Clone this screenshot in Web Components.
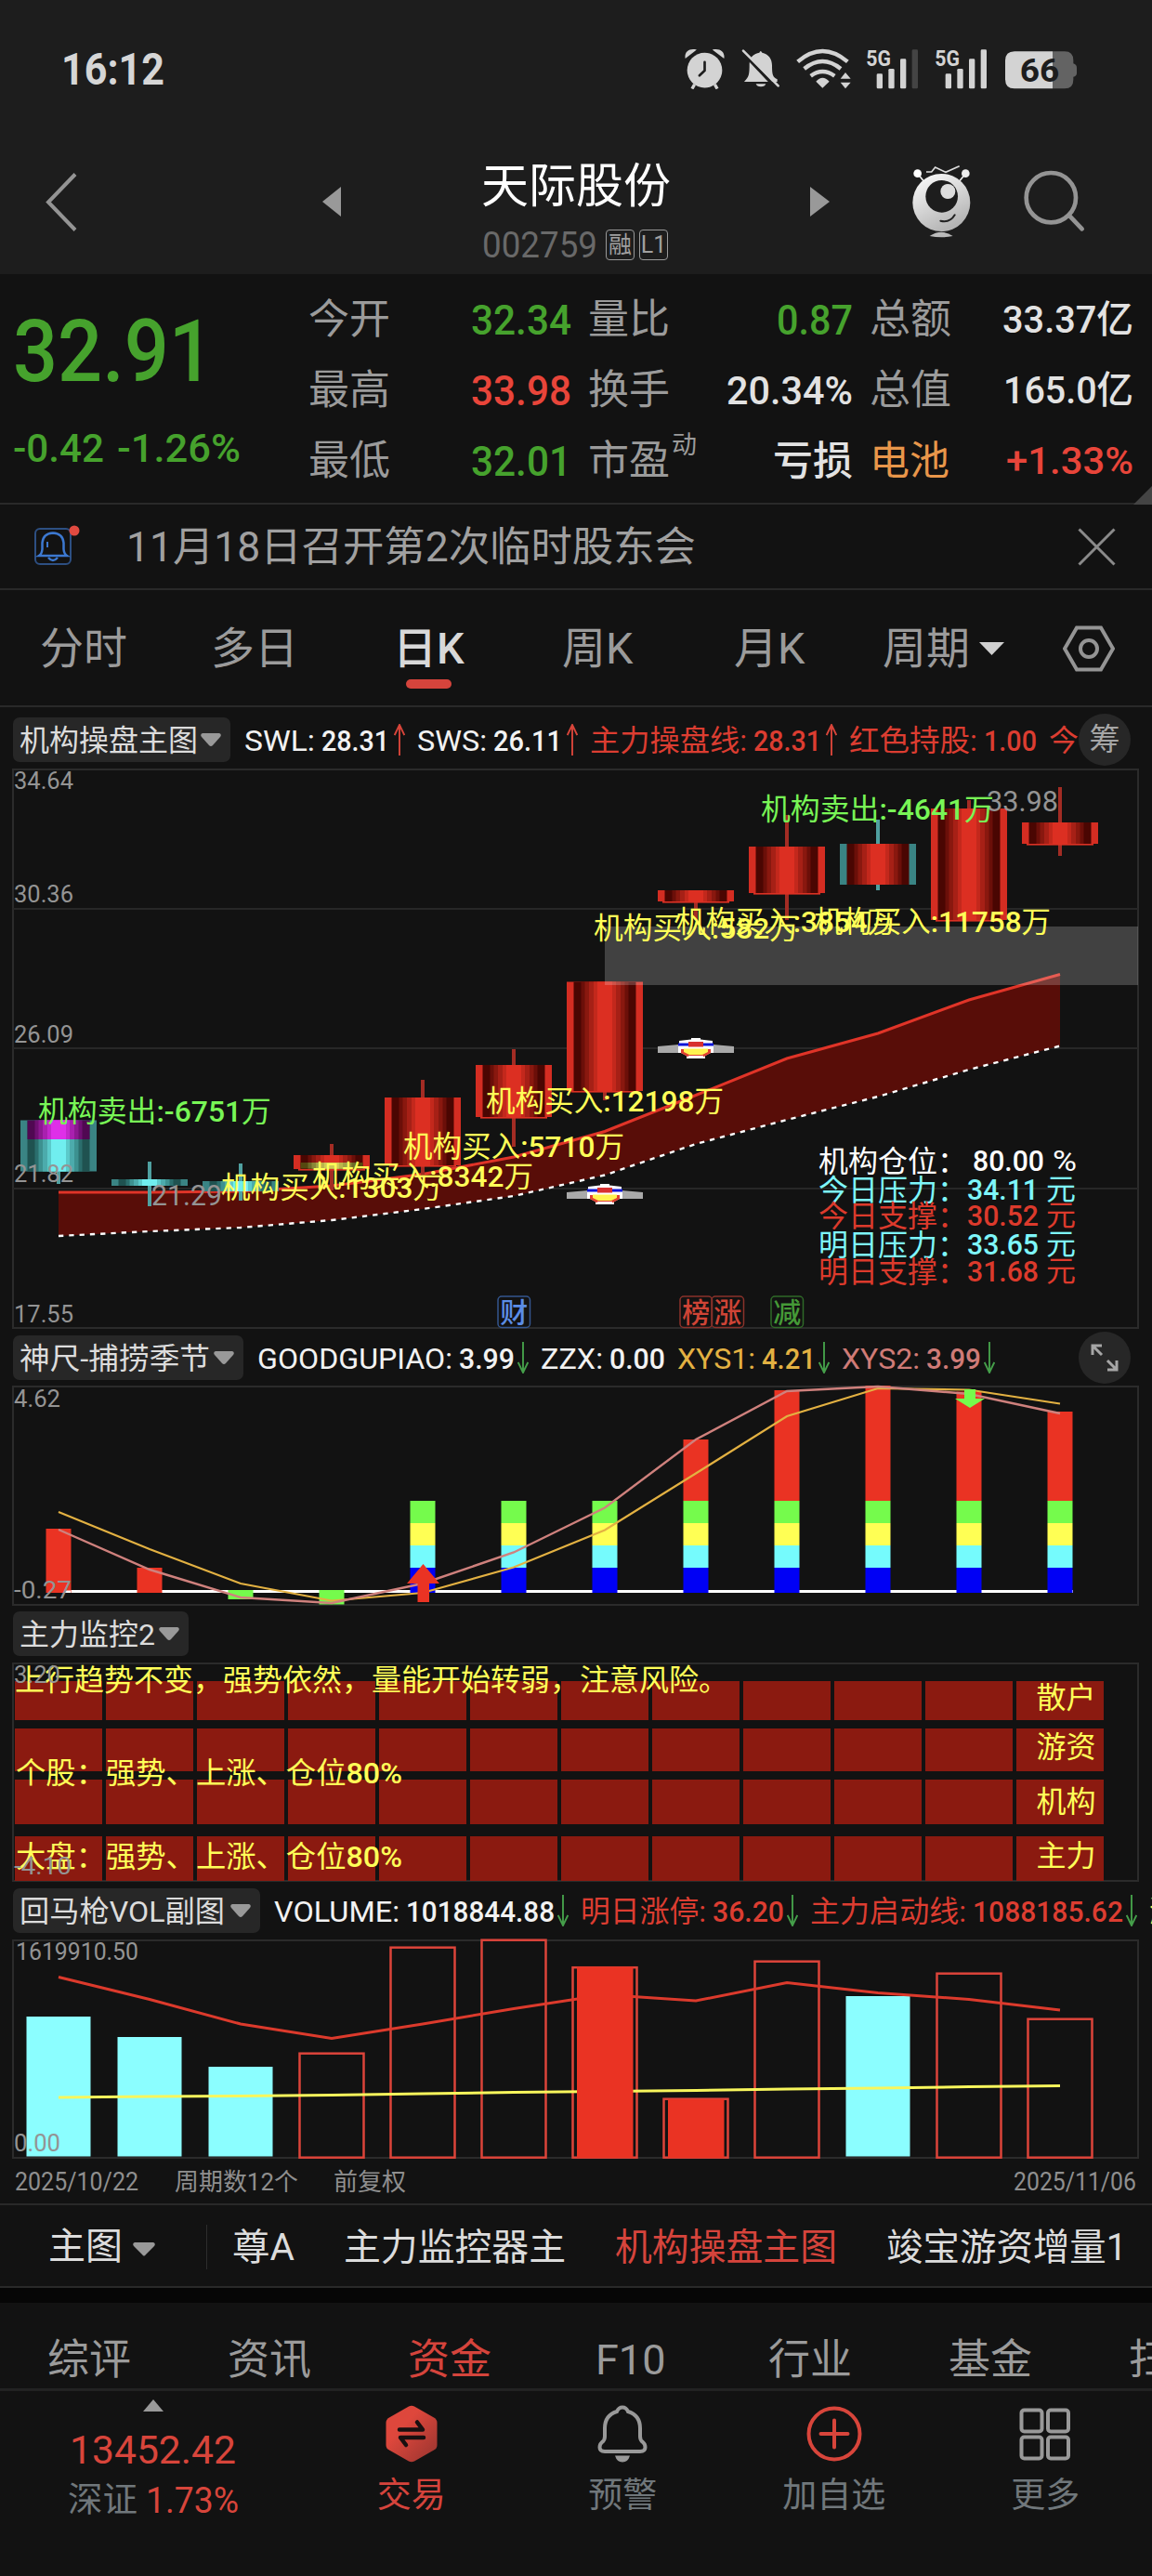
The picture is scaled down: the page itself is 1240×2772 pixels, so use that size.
<!DOCTYPE html>
<html lang="zh-CN">
<head>
<meta charset="utf-8">
<title>天际股份 002759</title>
<style>
    html, body { margin: 0; background: #121212; }
    body { width: 1240px; height: 2772px; overflow: hidden; color: #dcdcdc; font-family: Roboto, "Noto Sans CJK SC", sans-serif; }
</style>
</head>
<body>
<stock-page></stock-page>

<script>
const RED = '#dc3d31';
const GREEN = '#46a22d';
const GREY = '#949494';
const COLUMNS = 12;
const columnX = (i) => 63 + 98 * i;

function define(name, html, setup) {
    window.customElements.define(name, class extends HTMLElement {
        constructor() {
            super();
            this._shadowRoot = this.attachShadow({mode: 'open'});
        }

        connectedCallback() {
            this._shadowRoot.innerHTML = typeof html === 'function' ? html(this) : html;
            if (setup) {
                setup(this, this._shadowRoot);
            }
        }
    });
}

// Text squeezed or stretched to an exact width
define('fit-text', `
    <style>
        :host { display: inline-block; flex: none; white-space: nowrap; line-height: 1.2; }
        span { display: inline-block; padding-top: 2px; transform-origin: 0 50%; }
    </style>
    <span><slot></slot></span>
`, (host, root) => {
    const span = root.querySelector('span');
    const width = Number(host.getAttribute('w'));
    host.style.fontSize = host.getAttribute('size') + 'px';
    const natural = span.getBoundingClientRect().width;
    host.style.width = width + 'px';
    span.style.transform = `scaleX(${width / natural})`;
});

define('status-bar', `
    <style>
        :host { display: flex; align-items: center; height: 148px; box-sizing: border-box; padding: 0 81px 0 66px; background: #1d1d1d; color: #d6d6d6; }
        fit-text { font-weight: 700; margin-right: auto; }
        svg { display: block; flex: none; }
        .signal { font: 700 74px "Roboto"; }
        .battery { font: 700 104px "Roboto"; }
    </style>
    <fit-text w="111" size="48">16:12</fit-text>
    <svg width="43" height="44" viewBox="48 65 130 132" fill="#d3d3d3">
        <circle cx="113" cy="136" r="57"/>
        <path d="M50 98C46 76 62 63 87 69Z M176 98C180 76 163 63 138 69Z"/>
        <path d="M80 182L72 196M146 182L154 196" stroke="#d3d3d3" stroke-width="10"/>
        <path d="M113 109V137L96 153" fill="none" stroke="#1d1d1d" stroke-width="8" stroke-linecap="round"/>
    </svg>
    <svg style="margin-left:18px" width="42" height="44" viewBox="231 65 126 132" fill="#d3d3d3">
        <path d="M240 173C256 156 257 150 257 115C258 92 272 82 289 79Q293 69 298 79C319 84 330 99 330 120C330 153 333 158 347 165L347 173Z"/>
        <path d="M278 180H310Q307 189 294 189Q281 189 278 180Z"/>
        <path d="M230 73L346 196" stroke="#1d1d1d" stroke-width="10"/>
        <path d="M237 73L350 186" stroke="#d3d3d3" stroke-width="8" stroke-linecap="round"/>
    </svg>
    <svg style="margin-left:16px" width="60" height="44" viewBox="405 65 180 132" fill="none" stroke="#d3d3d3">
        <path d="M413 108Q493 40 574 108M434 131Q493 83 552 131M455 154Q493 126 532 154" stroke-width="13"/>
        <path d="M472 172Q493 149 515 172L493 193Z" fill="#d3d3d3" stroke="none"/>
        <path d="M551 163L567 143L584 163ZM551 175L567 195L584 175Z" fill="#d3d3d3" stroke="none"/>
    </svg>
    <svg class="signal" style="margin-left:16px" width="58" height="44" viewBox="633 65 174 132" fill="#d3d3d3">
        <text x="634" y="121" textLength="80" lengthAdjust="spacingAndGlyphs">5G</text>
        <rect x="668" y="147" width="19" height="48" rx="4"/><rect x="706" y="131" width="19" height="64" rx="4"/>
        <rect x="744" y="99" width="19" height="96" rx="4"/><rect x="782" y="69" width="19" height="126" rx="4" fill="#444"/>
    </svg>
    <svg class="signal" style="margin-left:16px" width="58" height="44" viewBox="633 65 174 132" fill="#d3d3d3">
        <text x="634" y="121" textLength="80" lengthAdjust="spacingAndGlyphs">5G</text>
        <rect x="668" y="147" width="19" height="48" rx="4"/><rect x="706" y="131" width="19" height="64" rx="4"/>
        <rect x="744" y="99" width="19" height="96" rx="4"/><rect x="782" y="69" width="19" height="126" rx="4"/>
    </svg>
    <svg class="battery" style="margin-left:18px" width="77" height="44" viewBox="1086 65 231 132" fill="#d3d3d3">
        <path d="M1239 75H1278Q1306 75 1306 104V114Q1317 118 1317 127V145Q1317 154 1306 157V166Q1306 195 1278 195H1239Z" fill="#636363"/>
        <path d="M1239 75H1116Q1086 75 1086 105V165Q1086 195 1116 195H1239Z"/>
        <text x="1133" y="173" fill="#1d1d1d" textLength="128" lengthAdjust="spacingAndGlyphs">66</text>
    </svg>
`);

define('title-bar', `
    <style>
        :host { display: flex; align-items: flex-start; height: 147px; background: #1d1d1d; }
        svg { display: block; flex: none; }
        .name { width: 204px; margin-left: 151px; margin-top: 19px; color: #fff; }
        .name > fit-text { line-height: 64px; }
        .code { display: flex; align-items: center; gap: 5px; margin-top: 10px; color: #696969; padding-left: 1px; line-height: 38px; }
        .code fit-text { line-height: 38px; }
        .badge { box-sizing: border-box; width: 31px; height: 33px; border: 1.5px solid #999; border-radius: 4px; font-size: 25px; line-height: 31px; text-align: center; color: #a0a0a0; }
        .first { margin-left: 4px; }
    </style>
    <svg style="margin:38px 0 0 49px" width="34" height="63" viewBox="0 0 34 63"><path d="M32 1.5L3 31.5L32 61.5" fill="none" stroke="#949494" stroke-width="4"/></svg>
    <svg style="margin:53px 0 0 264px" width="20" height="32" viewBox="0 0 20 32"><path d="M20 0V32L0 16Z" fill="#999"/></svg>
    <div class="name">
        <fit-text w="204" size="51"><slot></slot></fit-text>
        <div class="code"><fit-text w="124" size="38">002759</fit-text><span class="badge first">融</span><span class="badge">L1</span></div>
    </div>
    <svg style="margin:53px 0 0 150px" width="21" height="32" viewBox="0 0 21 32"><path d="M0 0V32L21 16Z" fill="#999"/></svg>
    <svg style="margin:29px 0 0 89px" width="63" height="79" viewBox="786 440 189 237">
        <defs><linearGradient id="shell" x1="0" y1="0" x2=".5" y2="1"><stop offset="0" stop-color="#fff"/><stop offset="1" stop-color="#b5b5b5"/></linearGradient></defs>
        <g stroke="#eee" stroke-width="5"><path d="M803 469L823 494M958 469L938 494"/><path d="M831 464H848L860 449L894 465L938 445" fill="none" stroke="#ddd"/></g>
        <circle cx="803" cy="469" r="13" fill="#fff"/><circle cx="958" cy="469" r="13" fill="#eee"/>
        <circle cx="880" cy="563" r="93" fill="url(#shell)"/>
        <circle cx="881" cy="543" r="52" fill="#1d1d1d"/><circle cx="901" cy="527" r="24" fill="#ddd"/>
        <path d="M877 622Q908 629 923 603" fill="none" stroke="#222" stroke-width="6" stroke-linecap="round"/>
        <path d="M842 671Q880 645 917 671Q880 679 842 671Z" fill="#bbb"/>
    </svg>
    <svg style="margin:35px 0 0 57px" width="66" height="67" viewBox="1145 460 198 201" fill="none" stroke="#949494"><circle cx="1233" cy="549" r="80" stroke-width="14"/><path d="M1293 608L1333 650" stroke-width="14" stroke-linecap="round"/></svg>
`);

define('quote-cell', (host) => `
    <style>
        :host { display: flex; align-items: center; justify-content: space-between; color: #9b9b9b; font-size: 44px; line-height: 76px; white-space: nowrap; }
        fit-text { font-weight: 500; color: ${host.getAttribute('color') || '#e2e2e2'}; }
        .label { position: relative; }
    </style>
    <span class="label"><slot name="label"></slot></span>
    <fit-text w="${host.getAttribute('w')}" size="${host.getAttribute('size')}"><slot></slot></fit-text>
`);

define('quote-board', `
    <style>
        :host { display: flex; box-sizing: border-box; height: 248px; border-bottom: 2px solid #292929; position: relative; }
        .price { width: 318px; padding: 27px 0 0 14px; color: ${GREEN}; }
        .last { display: block; line-height: 110px; font-weight: 500; }
        .change { display: flex; gap: 14px; margin-top: 22px; font-weight: 500; }
        .grid { display: grid; grid-template-columns: 283px 285px 284px; column-gap: 18px; grid-auto-rows: 76px; padding-top: 11px; height: 228px; }
        .up { position: absolute; left: 90px; top: 8px; font-size: 27px; line-height: 1; }
        .corner { position: absolute; right: 0; bottom: -2px; }
    </style>
    <div class="price">
        <fit-text class="last" w="216" size="93">32.91</fit-text>
        <div class="change"><fit-text w="98" size="42">-0.42</fit-text><fit-text w="133" size="42">-1.26%</fit-text></div>
    </div>
    <div class="grid">
        <quote-cell w="108" size="45" color="${GREEN}"><span slot="label">今开</span>32.34</quote-cell>
        <quote-cell w="82" size="45" color="${GREEN}"><span slot="label">量比</span>0.87</quote-cell>
        <quote-cell w="141" size="41"><span slot="label">总额</span>33.37亿</quote-cell>
        <quote-cell w="108" size="45" color="#e8453a"><span slot="label">最高</span>33.98</quote-cell>
        <quote-cell w="136" size="42"><span slot="label">换手</span>20.34%</quote-cell>
        <quote-cell w="140" size="41"><span slot="label">总值</span>165.0亿</quote-cell>
        <quote-cell w="108" size="45" color="${GREEN}"><span slot="label">最低</span>32.01</quote-cell>
        <quote-cell w="86" size="43"><span slot="label">市盈<span class="up">动</span></span>亏损</quote-cell>
        <quote-cell w="137" size="41" color="#e8453a"><span slot="label" style="color:#e8964a;font-size:43px">电池</span>+1.33%</quote-cell>
    </div>
    <svg class="corner" width="20" height="20"><path d="M20 0V20H0Z" fill="#444"/></svg>
`);

define('notice-bar', `
    <style>
        :host { display: flex; align-items: center; box-sizing: border-box; height: 92px; border-bottom: 2px solid #292929; padding: 0 39px 0 37px; color: #a0a0a0; }
        fit-text { margin-left: 49px; margin-right: auto; }
        svg { display: block; }
    </style>
    <svg width="50" height="46" viewBox="0 0 50 46" fill="none" stroke="#3c78d0">
        <rect x="1" y="4" width="38" height="38" rx="5" stroke="#2d4f82" stroke-width="2"/>
        <path d="M5 33Q8 31 8.500 26V19Q9.500 9 20 8.500Q30.500 9 31.500 19V26Q32 31 35 33Z" stroke-width="2.500"/>
        <path d="M14 18V24" stroke-width="2"/><path d="M15 35Q20 41 25 35" stroke-width="2.500"/>
        <circle cx="43" cy="6" r="5.500" fill="#e04a40" stroke="none"/>
    </svg>
    <fit-text w="613" size="44"><slot></slot></fit-text>
    <svg width="41" height="41" viewBox="0 0 41 41"><path d="M1.500 1.500L39.500 39.500M39.500 1.500L1.500 39.500" stroke="#8a8a8a" stroke-width="3"/></svg>
`);

define('period-tabs', `
    <style>
        :host { display: grid; grid-template-columns: 184px 196px 182px 185px 160px 194px auto; align-items: center; box-sizing: border-box; height: 126px; border-bottom: 2px solid #292929; padding: 2px 0 0 43px; color: #9b9b9b; font-size: 47px; line-height: 56px; }
        .active { position: relative; color: #d8d8d8; font-weight: 500; }
        .active::after { content: ""; position: absolute; left: 14px; top: 61px; width: 49px; height: 10px; border-radius: 5px; background: #d5443c; }
        svg { display: block; }
        .more { display: flex; align-items: center; gap: 10px; }
    </style>
    <span>分时</span><span>多日</span><span class="active">日K</span><span>周K</span><span>月K</span>
    <span class="more">周期<svg width="27" height="14"><path d="M0 0H27L13.500 14Z" fill="#d0d0d0"/></svg></span>
    <svg width="56" height="50" viewBox="0 0 56 50" fill="none" stroke="#949494" stroke-width="4"><path d="M15 2.500H41L54 25L41 47.500H15L2 25Z"/><circle cx="28" cy="25" r="9"/></svg>
`);

define('ind-value', (host) => `
    <style>
        :host { display: flex; align-items: center; flex: none; font-weight: 500; color: ${host.getAttribute('color') || '#f2f2f2'}; }
        fit-text + fit-text { margin-left: 7px; }
        .label { font-weight: 400; }
        svg { display: block; margin-left: var(--arrow-gap, 3px); }
    </style>
    <fit-text class="label" w="${host.getAttribute('lw')}" size="32"><slot></slot></fit-text>
    ${host.hasAttribute('value') ? `<fit-text w="${host.getAttribute('w')}" size="32">${host.getAttribute('value')}</fit-text>` : ''}
    ${host.getAttribute('trend') === 'up' ? '<svg width="12" height="34" fill="none" stroke="#d8453a" stroke-width="1.900"><path d="M6 34V2M.7 12L6 1L11.300 12"/></svg>' : ''}
    ${host.getAttribute('trend') === 'down' ? '<svg width="12" height="34" fill="none" stroke="#459f4a" stroke-width="1.900"><path d="M6 0V32M.7 22L6 33L11.300 22"/></svg>' : ''}
`);

define('ind-bar', (host) => `
    <style>
        :host { display: flex; align-items: center; height: 56px; padding-left: 14px; position: relative; overflow: hidden; white-space: nowrap; }
        .pill { display: flex; align-items: center; justify-content: space-between; box-sizing: border-box; flex: none; width: ${host.getAttribute('pill')}px; height: 48px; border-radius: 7px; background: #272727; padding: 0 10px 0 7px; color: #dcdcdc; }
        .values { display: flex; gap: 13px; margin-left: 15px; }
        .round { position: absolute; right: 23px; top: 0; width: 56px; height: 56px; border-radius: 50%; background: #272727; color: #a6a6a6; display: flex; align-items: center; justify-content: center; font-size: 33px; line-height: 56px; }
    </style>
    <div class="pill"><fit-text w="${host.getAttribute('tw')}" size="32">${host.getAttribute('name')}</fit-text>
        <svg width="22" height="14"><path d="M2 0H20Q23 1 21 4L13 13Q11 15 9 13L1 4Q-1 1 2 0Z" fill="#999"/></svg></div>
    <div class="values"><slot></slot></div>
    ${host.hasAttribute('chip') ? '<div class="round">筹</div>' : ''}
    ${host.hasAttribute('expand') ? '<div class="round"><svg width="30" height="30" fill="none" stroke="#a6a6a6" stroke-width="3"><path d="M2 12V2H12M2 2L12 12M28 18V28H18M28 28L18 18"/></svg></div>' : ''}
`);

// Charts share one coordinate space: y runs down the whole page
const chartStyle = `
    <style>
        :host { display: block; }
        svg { display: block; overflow: visible; }
        text { font-family: Roboto, "Noto Sans CJK SC", sans-serif; }
        .mixed tspan { font-weight: 500; }
    </style>
`;

function chartSvg(top, bottom, body, grid = []) {
    return `${chartStyle}<svg width="1240" height="${bottom - top}" viewBox="0 ${top} 1240 ${bottom - top}">
        <rect x="14" y="${top + 1}" width="1211" height="${bottom - top - 2}" fill="none" stroke="#2b2b2b" stroke-width="2"/>
        ${grid.map((y) => `<path d="M14 ${y}H1225" stroke="#272727" stroke-width="2"/>`).join('')}
        ${body}</svg>`;
}

function rect(x, y, w, h, fill) {
    return `<rect x="${x}" y="${y}" width="${w}" height="${h}" fill="${fill}"/>`;
}

function label(text, x, y, width, size, fill, weight = 400) {
    const fit = width ? `textLength="${width}" lengthAdjust="spacingAndGlyphs"` : '';
    return `<text x="${x}" y="${y}" font-size="${size}" fill="${fill}" font-weight="${weight}" ${fit}>${text}</text>`;
}

// Digits sit a weight above the characters round them
function mixedLabel(text, x, y, width, size, fill) {
    return `<text class="mixed" x="${x}" y="${y}" font-size="${size}" fill="${fill}" textLength="${width}" lengthAdjust="spacingAndGlyphs">${text.replace(/[-:\d%]+/g, '<tspan>$&</tspan>')}</text>`;
}

function line(ys, color, width, extra = '') {
    return `<polyline points="${ys.map((y, i) => columnX(i) + ',' + y).join(' ')}" fill="none" stroke="${color}" stroke-width="${width}" ${extra}/>`;
}

const SHADES = {
    red: ['#4a0602', '#6b0f09', '#89180f', '#a62016', '#c3281c', '#dc2f22'],
    cyan: ['#1f5250', '#2b6e6d', '#3d9190', '#4cabac', '#5bcaca', '#70eeef'],
    magenta: ['#500852', '#6f1073', '#8d1891', '#a920af', '#c428cc', '#df2fe8'],
    olive: ['#55480f', '#6f6a28', '#8a8838', '#a3a244', '#bab64c', '#cfca55'],
};
const HALF_WIDTHS = [33.5, 25.5, 21.5, 17, 12, 8];

function stripes(x, top, bottom, shade) {
    return SHADES[shade].map((color, i) => rect(x - HALF_WIDTHS[i], top, HALF_WIDTHS[i] * 2, bottom - top, color)).join('');
}

// [body top, body bottom, wick top, wick bottom, edge, fill]
const CANDLES = [
    [1205.5, 1260.5, 1260, 1274, 'cyan', 'cyan'],
    [1269, 1276, 1250, 1298, 'cyan', 'cyan'],
    [1271, 1282, 1252, 1292, 'cyan', 'cyan'],
    [1243, 1258, 1231, 1281, 'red', 'red'],
    [1181, 1254, 1162, 1267, 'red', 'red'],
    [1146, 1202, 1129, 1234, 'red', 'red'],
    [1056.5, 1174, 1060, 1184, 'red', 'red'],
    [958, 970, 960, 990, 'red', 'red'],
    [911, 961, 877, 990, 'red', 'red'],
    [908, 952, 882, 958, 'cyan', 'red'],
    [870, 990, 861, 990, 'red', 'red'],
    [885, 908, 847, 921, 'red', 'red'],
];

function candle([top, bottom, high, low, edge, fill], i) {
    const x = columnX(i);
    const isRed = edge === 'red';
    return rect(x - 2, high, 4, low - high, isRed ? '#a32c24' : '#4fa0a0')
        + rect(x - 41, top, 82, bottom - top, isRed ? '#d42d22' : '#3a8484')
        + stripes(x, top, bottom, fill)
        + (isRed ? rect(x - 36, bottom, 72, 1.6, '#dc3023') : '');
}

function saucer(x, y) {
    return `<g transform="translate(${x} ${y})">
        <path d="M-41 -3L-18 -5H18L41 -3V4H-41Z" fill="#a9a9a9"/>
        <path d="M-5 -12H5V-10.500L18 -9V-6H19V4H16L10 7V10H-10V7L-16 4H-19V-6H-18V-9L-5 -10.500Z" fill="#fff"/>
        <path d="M-19 -6.500H19V-3.500H-19Z" fill="#0a14d8"/><path d="M-8 -8H8V-2.500H-8Z" fill="#d83030"/>
        <path d="M-16 0H16V4L9 8H-9L-16 4Z" fill="#e04030"/><path d="M-13 -.5H13V3L7 6H-7L-13 3Z" fill="#fff34f"/><path d="M-8 7H8V10H-8Z" fill="#fff"/></g>`;
}

const TREND_TOP = [1283, 1283, 1282, 1276, 1263.5, 1245, 1217.5, 1178.5, 1139, 1112, 1076, 1048.5];
const TREND_BOTTOM = [1330, 1325, 1321, 1313, 1301, 1287, 1264.5, 1231, 1205, 1180, 1151, 1125.5];

define('candle-chart', () => {
    const band = TREND_TOP.map((y, i) => columnX(i) + ',' + y)
        .concat(TREND_BOTTOM.map((y, i) => columnX(i) + ',' + y).reverse()).join(' ');
    const tag = (text, x, color, border) => `<rect x="${x}" y="1395" width="34.500" height="33.500" rx="4" fill="none" stroke="${border}" stroke-width="1.500"/>`
        + label(text, x + 2.2, 1423, 0, 30, color, 500);
    const row = (name, value, unit, y, color) => label(name, 881, y + 1, 0, 32, color)
        + label(value, value === '80.00' ? 1047 : 1041, y, 77, 32, color, 500)
        + label(unit, unit === '%' ? 1133 : 1126, y, unit === '%' ? 26 : 32, 32, color);
    const yellow = '#ffff58';
    const green = '#78f656';
    return chartSvg(827, 1430, `
        <polygon points="${band}" fill="#580d08"/>
        ${line(TREND_TOP, '#e03428', 3)}
        ${line(TREND_BOTTOM, '#fff', 2.4, 'stroke-dasharray="5.3 6"')}
        ${CANDLES.map(candle).join('')}
        ${stripes(63, 1205.5, 1226, 'magenta')}
        ${stripes(columnX(3), 1251, 1257.5, 'olive')}
        ${rect(651, 997, 574, 63, 'rgba(255,255,255,.2)')}
        ${saucer(651, 1286)}${saucer(749, 1129)}
        ${['34.64', '30.36', '26.09', '21.82', '17.55'].map((v, i) => label(v, 15, [848.5, 970.5, 1122, 1272, 1423][i], 64, 26, GREY)).join('')}
        ${label('21.29', 163, 1296.5, 76, 32, GREY)}
        ${label('33.98', 1062, 872.5, 77, 32, GREY)}
        ${mixedLabel('机构卖出:-6751万', 41, 1207, 251, 31.5, green)}
        ${mixedLabel('机构买入:1303万', 238, 1288.5, 238, 31.5, yellow)}
        ${mixedLabel('机构买入:8342万', 336, 1276.5, 238, 31.5, yellow)}
        ${mixedLabel('机构买入:5710万', 434, 1245, 238, 31.5, yellow)}
        ${mixedLabel('机构买入:12198万', 523, 1195.5, 256, 31.5, yellow)}
        ${mixedLabel('机构买入:582万', 639, 1010, 221, 31.5, yellow)}
        ${mixedLabel('机构买入:3854万', 728, 1003, 237, 31.5, yellow)}
        ${mixedLabel('机构买入:11758万', 876, 1003, 255, 31.5, yellow)}
        ${mixedLabel('机构卖出:-4641万', 819, 882, 251, 31.5, green)}
        ${row('机构仓位：', '80.00', '%', 1260, '#fff')}
        ${row('今日压力：', '34.11', '元', 1290.5, '#7ef6fa')}
        ${row('今日支撑：', '30.52', '元', 1319, '#dc3a2c')}
        ${row('明日压力：', '33.65', '元', 1350, '#7ef6fa')}
        ${row('明日支撑：', '31.68', '元', 1378.5, '#dc3a2c')}
        ${tag('财', 536, '#5b8de6', '#34568f')}
        ${tag('榜', 732, '#cf4436', '#8a322b')}${tag('涨', 766, '#cf4436', '#8a322b')}
        ${tag('减', 830, '#459a37', '#2f6a28')}
    `, [978, 1128, 1279]);
});

define('season-chart', () => {
    const redTops = {7: 1549, 8: 1496, 9: 1491, 10: 1497.5, 11: 1519};
    let bars = '';
    for (let i = 4; i < COLUMNS; i++) {
        const x = columnX(i) - 13.5;
        if (redTops[i]) {
            bars += rect(x, redTops[i], 27, 1615 - redTops[i], '#ea3323');
        }
        bars += rect(x, 1615, 27, 24, '#75fb4c') + rect(x, 1639, 27, 24, '#ffff54')
            + rect(x, 1663, 27, 24, '#75fbfd') + rect(x, 1687, 27, 27, '#0000f5');
    }
    return chartSvg(1491, 1728, `
        ${rect(63, 1711, 1092, 3, '#fff')}
        ${rect(49.5, 1645, 27, 69, '#ea3323')}${rect(147.5, 1687, 27, 27, '#ea3323')}
        ${rect(245.5, 1711, 27, 10, '#75fb4c')}${rect(343.5, 1711, 27, 15.5, '#75fb4c')}
        ${bars}
        ${rect(69, 1711.5, 7, 2.5, '#fff')}
        ${line([1627, 1667, 1704, 1722.5, 1714, 1686.5, 1646.5, 1585.5, 1524, 1494, 1495.5, 1510.5], '#e3b142', 2.2)}
        ${line([1646, 1689, 1719, 1725, 1704, 1670.5, 1622.5, 1549, 1497, 1492, 1500, 1521], '#cf817d', 2.4)}
        <path d="M455.500 1683L473 1704H462V1724H449.500V1704H438Z" fill="#ea3323"/>
        <path d="M1038 1495H1050V1505H1060L1044 1515L1028 1505H1038Z" fill="#75fb4c"/>
        ${label('4.62', 15, 1513.5, 50, 26, GREY)}${label('-0.27', 15, 1720, 62, 26, GREY)}
    `);
});

define('monitor-chart', () => {
    const rows = [[1809, 1851], [1860, 1906], [1915, 1963], [1976, 2024]];
    let cells = '';
    rows.forEach(([top, bottom]) => {
        for (let i = 0; i < COLUMNS; i++) {
            cells += rect(16 + 98 * i, top, 94, bottom - top, '#8b1a10');
        }
    });
    const yellow = '#ffff58';
    return chartSvg(1789, 2025, `
        ${cells}
        ${label('上行趋势不变，强势依然，量能开始转弱，注意风险。', 16, 1819, 768, 32, yellow)}
        ${mixedLabel('个股：强势、上涨、仓位80%', 17, 1919, 416, 32, yellow)}
        ${mixedLabel('大盘：强势、上涨、仓位80%', 17, 2009, 416, 32, yellow)}
        ${label('3.20', 15, 1811, 50, 26, GREY)}
        ${label('-4.10', 15, 2017, 62, 26, GREY)}
        ${['散户', '游资', '机构', '主力'].map((v, i) => label(v, 1115.5, [1837.5, 1890.5, 1949.5, 2007.5][i], 0, 32, yellow)).join('')}
    `);
});

define('volume-chart', () => {
    const tops = [2170, 2192, 2224, 2208.5, 2094.5, 2086.5, 2116, 2257.5, 2109.5, 2148, 2122.5, 2171.5];
    const solid = [0, 1, 2, 9];
    const bars = tops.map((top, i) => solid.includes(i)
        ? rect(columnX(i) - 34.5, top, 69, 2320.5 - top, '#8bfeff')
        : `<rect x="${columnX(i) - 34.5}" y="${top + 1.2}" width="69" height="${2320.5 - top}" fill="none" stroke="#dc443a" stroke-width="2.500"/>`).join('');
    return chartSvg(2087, 2323, `
        ${bars}
        ${line([2127.5, 2151.5, 2178, 2193.5, 2178, 2161.5, 2146.5, 2153, 2133.5, 2144.5, 2151.5, 2163], '#dc3a2c', 3)}
        ${line([2257, 2256, 2255.5, 2254.5, 2253, 2251.5, 2250.5, 2249.5, 2248, 2247, 2245.5, 2244.5], '#f8f65c', 3)}
        ${rect(621, 2116.5, 60.5, 205.5, '#ea3323')}${rect(719, 2259, 60.5, 63, '#ea3323')}
        ${label('1619910.50', 17, 2109, 132, 26, GREY)}${label('0.00', 15, 2315, 50, 26, GREY)}
    `);
});

define('date-axis', `
    <style>
        :host { display: flex; align-items: center; box-sizing: border-box; height: 50px; border-bottom: 2px solid #292929; padding: 1px 17px 0 16px; color: #8f8f8f; }
        fit-text:nth-of-type(2) { margin-left: 39px; }
        fit-text:nth-of-type(3) { margin-left: 38px; margin-right: auto; }
    </style>
    <fit-text w="133" size="27">2025/10/22</fit-text><fit-text w="133" size="26">周期数12个</fit-text><fit-text w="78" size="26">前复权</fit-text>
    <fit-text w="132" size="27">2025/11/06</fit-text>
`);

define('chart-picker', `
    <style>
        :host { display: flex; align-items: center; box-sizing: border-box; height: 89px; border-bottom: 2px solid #292929; padding: 2px 0 0 52px; color: #dcdcdc; font-size: 40px; line-height: 50px; white-space: nowrap; overflow: hidden; }
        span { flex: none; }
        svg { display: block; flex: none; margin: 6px 0 0 11px; }
        .rule { flex: none; width: 1px; height: 48px; background: #2d2d2d; margin: 0 27px 0 55px; }
        .list { display: flex; flex: none; }
        ::slotted(fit-text) { margin-right: 53px; }
    </style>
    <span>主图</span>
    <svg width="24" height="15"><path d="M2 0H22Q25 1 23 4L14 13Q12 16 10 13L1 4Q-1 1 2 0Z" fill="#999"/></svg>
    <div class="rule"></div>
    <div class="list"><slot></slot></div>
`);

define('info-tabs', `
    <style>
        :host { display: flex; box-sizing: border-box; height: 111px; border-top: 16px solid #060606; border-bottom: 3px solid #222; padding-left: 51px; padding-top: 18px; color: #9b9b9b; font-size: 45px; line-height: 88px; white-space: nowrap; overflow: hidden; }
        span { flex: none; width: 194px; }
        .on { color: #d5443c; }
        .code { box-sizing: border-box; padding-left: 8px; }
    </style>
    <span>综评</span><span>资讯</span><span class="on">资金</span><span class="code">F10</span><span>行业</span><span>基金</span><span>扫雷</span>
`);

define('nav-item', `
    <style>
        :host { display: flex; flex-direction: column; align-items: center; color: #70777b; font-size: 37px; line-height: 44px; }
        .icon { height: 64px; margin: 14px 0 13px; display: flex; align-items: center; }
        :host([on]) { color: #d5443c; }
    </style>
    <div class="icon"><slot name="icon"></slot></div>
    <slot></slot>
`);

define('bottom-nav', `
    <style>
        :host { display: grid; grid-template-columns: 329px repeat(4, 227.5px); height: 199px; }
        svg { display: block; }
        .index { display: flex; flex-direction: column; align-items: center; color: #d8453b; }
        .index > svg { margin: 9px 0 14px; }
        .index div { display: flex; gap: 9px; align-items: center; margin-top: 4px; color: #70777b; }
        .index div fit-text + fit-text { color: #d8453b; }
    </style>
    <div class="index">
        <svg width="22" height="13"><path d="M11 0L22 13H0Z" fill="#999"/></svg>
        <fit-text w="179" size="43">13452.42</fit-text>
        <div><fit-text w="75" size="37">深证</fit-text><fit-text w="100" size="38">1.73%</fit-text></div>
    </div>
    <nav-item on>
        <svg slot="icon" width="56" height="62" viewBox="0 0 56 62">
            <defs><linearGradient id="g" x1="0" y1="0" x2="1" y2="1"><stop offset=".35" stop-color="#de473c"/><stop offset="1" stop-color="#96342f"/></linearGradient></defs>
            <path d="M25 1.500Q28 0 31 1.500L52 13.500Q55.500 15.500 55.500 19V43Q55.500 46.500 52 48.500L31 60.500Q28 62 25 60.500L4 48.500Q.5 46.500 .5 43V19Q.5 15.500 4 13.500Z" fill="url(#g)"/>
            <path d="M15 26.500H40L34 18.500M41 35H16L22 43" fill="none" stroke="#181010" stroke-width="4.500" stroke-linecap="round" stroke-linejoin="round"/>
        </svg>交易</nav-item>
    <nav-item>
        <svg slot="icon" width="54" height="62" viewBox="0 0 54 62"><path d="M27 2.500Q31 2.500 33 7Q46 11 46 25V34Q46 38 49 40Q51.500 42 51.500 45.500Q51.500 50 46 50H8Q2.500 50 2.500 45.500Q2.500 42 5 40Q8 38 8 34V25Q8 11 21 7Q23 2.500 27 2.500Z" fill="none" stroke="#999" stroke-width="4"/><path d="M19 54.500H35Q33 61.500 27 61.500Q21 61.500 19 54.500Z" fill="#999"/></svg>预警</nav-item>
    <nav-item>
        <svg slot="icon" width="60" height="60" viewBox="0 0 60 60" fill="none" stroke="#d8453b" stroke-width="4"><circle cx="30" cy="30" r="27.500"/><path d="M30 15.500V44.500M15.500 30H44.500" stroke-linecap="round"/></svg>加自选</nav-item>
    <nav-item>
        <svg slot="icon" width="56" height="57" viewBox="0 0 56 57" fill="none" stroke="#999" stroke-width="4"><rect x="2.500" y="2.500" width="22" height="23" rx="3"/><rect x="31" y="2.500" width="22" height="23" rx="3"/><rect x="2.500" y="31.500" width="22" height="23" rx="3"/><rect x="31" y="31.500" width="22" height="23" rx="3"/></svg>更多</nav-item>
`);

define('stock-page', `
    <style>
        :host { display: block; width: 1240px; height: 2772px; overflow: hidden; background: #121212; }
        .bar1 { margin-top: 7px; margin-bottom: 3px; --arrow-gap: 5px; }
        .bar2 { margin-top: 3px; margin-bottom: 2px; }
        .bar3 { margin-top: 2px; margin-bottom: 3px; }
        .bar4 { margin-top: 3px; margin-bottom: 3px; }
        .red { color: #d5443c; }
    </style>
    <status-bar></status-bar>
    <title-bar>天际股份</title-bar>
    <quote-board></quote-board>
    <notice-bar>11月18日召开第2次临时股东会</notice-bar>
    <period-tabs></period-tabs>

    <ind-bar class="bar1" name="机构操盘主图" pill="234" tw="192" chip>
        <ind-value lw="76" value="28.31" w="73" trend="up">SWL:</ind-value>
        <ind-value lw="75" value="26.11" w="74" trend="up">SWS:</ind-value>
        <ind-value lw="169" value="28.31" w="73" trend="up" color="${RED}">主力操盘线:</ind-value>
        <ind-value lw="138" value="1.00" w="57" color="${RED}">红色持股:</ind-value>
        <ind-value lw="32" color="${RED}">今</ind-value>
    </ind-bar>
    <candle-chart></candle-chart>

    <ind-bar class="bar2" name="神尺-捕捞季节" pill="248" tw="205" expand>
        <ind-value lw="210" value="3.99" w="60" trend="down">GOODGUPIAO:</ind-value>
        <ind-value lw="67" value="0.00" w="60">ZZX:</ind-value>
        <ind-value lw="84" value="4.21" w="58" trend="down" color="#e3b142">XYS1:</ind-value>
        <ind-value lw="84" value="3.99" w="59" trend="down" color="#cf7b77">XYS2:</ind-value>
    </ind-bar>
    <season-chart></season-chart>

    <ind-bar class="bar3" name="主力监控2" pill="189" tw="146"></ind-bar>
    <monitor-chart></monitor-chart>

    <ind-bar class="bar4" name="回马枪VOL副图" pill="266" tw="221">
        <ind-value lw="135" value="1018844.88" w="160" trend="down">VOLUME:</ind-value>
        <ind-value lw="135" value="36.20" w="77" trend="down" color="${RED}">明日涨停:</ind-value>
        <ind-value lw="168" value="1088185.62" w="162" trend="down" color="${RED}">主力启动线:</ind-value>
        <ind-value lw="32" color="#f8f65c">涨</ind-value>
    </ind-bar>
    <volume-chart></volume-chart>
    <date-axis></date-axis>

    <chart-picker>
        <fit-text w="67" size="40">尊A</fit-text>
        <fit-text w="239" size="40">主力监控器主</fit-text>
        <fit-text class="red" w="239" size="40">机构操盘主图</fit-text>
        <fit-text w="259" size="40">竣宝游资增量1</fit-text>
    </chart-picker>
    <info-tabs></info-tabs>
    <bottom-nav></bottom-nav>
`);
</script>
</body>
</html>
